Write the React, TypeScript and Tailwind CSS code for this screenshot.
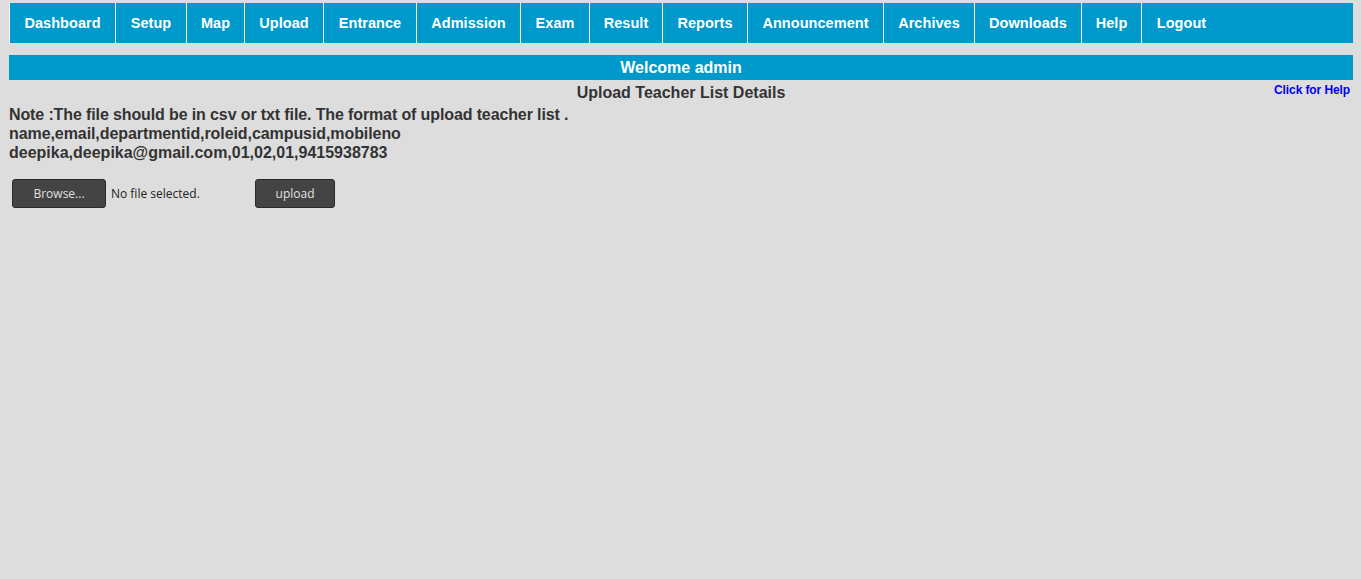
import React from "react";

const items: [string, string][] = [
  ["Dashboard", "w-[106px]"],
  ["Setup", "w-[71px]"],
  ["Map", "w-[58px]"],
  ["Upload", "w-[79px]"],
  ["Entrance", "w-[93px]"],
  ["Admission", "w-[104px]"],
  ["Exam", "w-[69px]"],
  ["Result", "w-[73px]"],
  ["Reports", "w-[85px]"],
  ["Announcement", "w-[136px]"],
  ["Archives", "w-[91px]"],
  ["Downloads", "w-[107px]"],
  ["Help", "w-[60px]"],
  ["Logout", "w-[80px]"],
];

export default function App() {
  return (
    <div
      className="min-h-[579px] w-full bg-[#dddddd] text-[#333333]"
      style={{ fontFamily: '"Liberation Sans", Arial, sans-serif' }}
    >
      <div className="px-[9px] pt-[3px]">
        <div className="flex h-[40px] w-[1344px] bg-[#0099cc]">
          {items.map(([it, w]) => (
            <div
              key={it}
              className={`flex h-full items-center justify-center border-l border-white pt-[2px] text-[14.5px] font-bold tracking-[0.05px] text-white ${w}`}
            >
              {it}
            </div>
          ))}
        </div>
        <div className="mt-[12px] flex h-[25px] w-[1344px] items-center justify-center bg-[#0099cc] text-[16px] font-bold text-white">
          Welcome admin
        </div>
        <div className="relative w-[1344px]">
          <div className="flex h-[25px] items-center justify-center text-[16px] font-bold text-[#333333]">
            Upload Teacher List Details
          </div>
          <a className="absolute right-[3px] top-[1px] text-[12px] font-bold tracking-[-0.1px] text-[#0000ee]">
            Click for Help
          </a>
        </div>
        <div className="text-[16px] font-bold leading-[19px] text-[#333333]">
          <div className="tracking-[-0.12px]">
            Note :The file should be in csv or txt file. The format of upload teacher list .
          </div>
          <div className="tracking-[-0.08px]">name,email,departmentid,roleid,campusid,mobileno</div>
          <div>deepika,deepika@gmail.com,01,02,01,9415938783</div>
        </div>
        <div
          className="mt-[17px] ml-[3px] flex items-center text-[12px]"
          style={{ fontFamily: '"Open Sans", "Noto Sans", sans-serif' }}
        >
          <div className="flex h-[29px] w-[94px] items-center justify-center rounded-[3px] border border-[#2a2a2a] bg-[#444444] text-[#e0e0e0]">
            Browse...
          </div>
          <span className="ml-[5px] w-[144px] text-[#222222]">No file selected.</span>
          <div className="flex h-[29px] w-[80px] items-center justify-center rounded-[3px] border border-[#2a2a2a] bg-[#444444] text-[#e0e0e0]">
            upload
          </div>
        </div>
      </div>
    </div>
  );
}
